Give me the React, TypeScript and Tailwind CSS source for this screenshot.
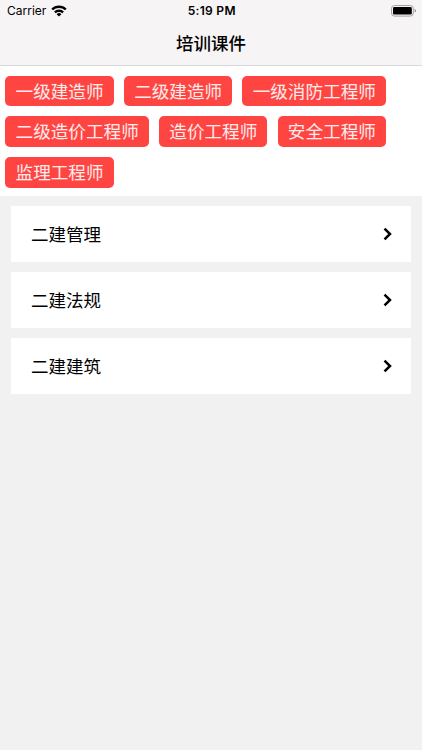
const tags = [
  '一级建造师',
  '二级建造师',
  '一级消防工程师',
  '二级造价工程师',
  '造价工程师',
  '安全工程师',
  '监理工程师',
];

const courses = ['二建管理', '二建法规', '二建建筑'];

function WifiIcon() {
  return (
    <svg className="h-[12px] w-[16px]" viewBox="0 0 16 12" fill="none" stroke="#000" strokeWidth="2.4">
      <path d="M1.2 4.5a9.7 9.7 0 0 1 13.6 0" />
      <path d="M3.9 7.4a5.9 5.9 0 0 1 8.2 0" />
      <path d="M8 11.6 5.6 9.2a3.4 3.4 0 0 1 4.8 0Z" fill="#000" stroke="none" />
    </svg>
  );
}

function BatteryIcon() {
  return (
    <svg className="h-[12px] w-[26px]" viewBox="0 0 26 12">
      <rect x="0.5" y="0.5" width="21.8" height="10.6" rx="3" fill="none" stroke="#a3a2a3" />
      <rect x="2" y="2" width="18.8" height="7.6" rx="1.4" fill="#000" />
      <path d="M23.7 4v3.6c.8-.3 1.3-1 1.3-1.8s-.5-1.500-1.300-1.800Z" fill="#8c8b8c" />
    </svg>
  );
}

function StatusBar() {
  return (
    <div className="grid h-[22px] grid-cols-3 items-center pr-[4.5px] pl-[7px] font-['Inter',sans-serif] text-[12px] leading-[22px]">
      <div className="flex items-center gap-[5px]">
        <span>Carrier</span>
        <WifiIcon />
      </div>
      <span className="pr-[1px] text-center font-semibold tracking-[0.3px]">5:19 PM</span>
      <div className="flex justify-end">
        <BatteryIcon />
      </div>
    </div>
  );
}

export default function App() {
  return (
    <div className="flex h-screen w-full flex-col overflow-hidden bg-[#f1f1f1] font-['Noto_Sans_CJK_SC',sans-serif] text-black">
      <header className="h-[66px] shrink-0 border-b border-[#dbd8d9] bg-[#f6f4f5]">
        <StatusBar />
        <h1 className="pt-[7px] text-center text-[17.5px] leading-[28px] font-medium">培训课件</h1>
      </header>

      {/* Categories */}
      <div className="flex h-[130px] shrink-0 flex-wrap content-start gap-x-[10.2px] gap-y-[10.3px] bg-white pt-[9.7px] pl-[5.4px]">
        {tags.map((tag) => (
          <button
            key={tag}
            className="h-[30.5px] rounded-[5px] bg-[#ff4542] px-[10.2px] text-[17.6px] leading-[30.5px] text-white/90"
          >
            {tag}
          </button>
        ))}
      </div>

      {/* Courses */}
      <ul className="flex flex-col gap-[10.2px] pt-[10px] pr-[11px] pl-[10.6px]">
        {courses.map((course) => (
          <li key={course} className="flex h-[56px] items-center justify-between bg-white pr-[19.500px] pl-[20.3px]">
            <span className="text-[17.5px] leading-[28px]">{course}</span>
            <svg className="h-[14px] w-[9px]" viewBox="0 0 9 14" fill="none" stroke="#000" strokeWidth="2.5">
              <path d="M1.5 1.6 7 7l-5.500 5.400" />
            </svg>
          </li>
        ))}
      </ul>
    </div>
  );
}
